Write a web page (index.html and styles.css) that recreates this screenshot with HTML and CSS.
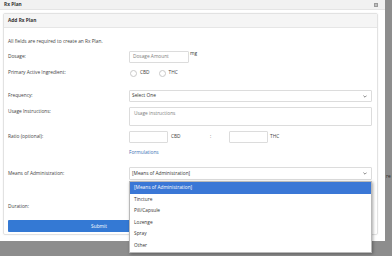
FILE: index.html
```html
<!DOCTYPE html>
<html>
<head>
<meta charset="utf-8">
<link rel="stylesheet" href="styles.css">
</head>
<body>
<div class="page">
  <div class="modal">
    <div class="modal-header">
      <span class="modal-title">Rx Plan</span>
      <svg class="close" width="4" height="4" viewBox="0 0 4 4"><rect width="4" height="4" fill="#9a9a9a"/><path d="M1 1L3 3M3 1L1 3" stroke="#d8d8d8" stroke-width="0.6"/></svg>
    </div>
    <div class="modal-body">
      <div class="card">
        <div class="card-header">Add Rx Plan</div>
        <div class="card-body">
          <p class="intro">All fields are required to create an Rx Plan.</p>

          <div class="row h12">
            <span class="lbl">Dosage:</span>
            <div class="field">
              <span class="box dosage placeholder">Dosage Amount</span>
              <span class="unit-top">mg</span>
            </div>
          </div>

          <div class="row h10 mb7">
            <span class="lbl">Primary Active Ingredient:</span>
            <div class="field">
              <span class="radio"></span><span class="radio-text">CBD</span>
              <span class="radio"></span><span class="radio-text">THC</span>
            </div>
          </div>

          <div class="row h12">
            <span class="lbl">Frequency:</span>
            <div class="field">
              <span class="box select">Select One
                <svg class="chev" width="4" height="3" viewBox="0 0 4 3"><path d="M0.4 0.6L2 2.2L3.6 0.6" fill="none" stroke="#555" stroke-width="0.7"/></svg>
              </span>
            </div>
          </div>

          <div class="row h19 top">
            <span class="lbl lbl-pad">Usage Instructions:</span>
            <div class="field">
              <span class="box textarea placeholder">Usage instructions</span>
            </div>
          </div>

          <div class="row h12">
            <span class="lbl">Ratio (optional):</span>
            <div class="field">
              <span class="box ratio"></span>
              <span class="ratio-unit">CBD</span>
              <span class="colon">:</span>
              <span class="box ratio"></span>
              <span class="ratio-unit">THC</span>
            </div>
          </div>

          <div class="row h10 mb4">
            <span class="lbl"></span>
            <div class="field"><a class="link">Formulations</a></div>
          </div>

          <div class="row h13">
            <span class="lbl">Means of Administration:</span>
            <div class="field">
              <span class="box select means">[Means of Administration]
                <svg class="chev" width="4" height="3" viewBox="0 0 4 3"><path d="M0.4 0.6L2 2.2L3.6 0.6" fill="none" stroke="#555" stroke-width="0.7"/></svg>
                <span class="dropdown">
                  <span class="opt active">[Means of Administration]</span>
                  <span class="opt">Tincture</span>
                  <span class="opt">Pill/Capsule</span>
                  <span class="opt">Lozenge</span>
                  <span class="opt">Spray</span>
                  <span class="opt">Other</span>
                </span>
              </span>
            </div>
          </div>

          <div class="row h12 mt16">
            <span class="lbl">Duration:</span>
            <div class="field"></div>
          </div>

          <div class="row h12 mt2">
            <button class="submit">Submit</button>
          </div>
        </div>
      </div>
    </div>
  </div>
  <div class="strip"><span class="behind">re i</span></div>
</div>
</body>
</html>
```

FILE: styles.css
```css
* { box-sizing: border-box; margin: 0; padding: 0; }

body {
  width: 392px;
  height: 256px;
  overflow: hidden;
  background: #8d8d8d;
  font-family: "Open Sans", "DejaVu Sans", sans-serif;
  font-size: 4.8px;
  line-height: 1.2;
  color: #3f3f3f;
}

.page { display: flex; height: 256px; }

.modal {
  width: 385px;
  height: 241px;
  flex: none;
  background: #fff;
  display: flex;
  flex-direction: column;
}

.modal-header {
  height: 10px;
  background: #f1f1f1;
  border-bottom: 1px solid #e4e4e4;
  display: flex;
  align-items: center;
  justify-content: space-between;
  padding: 0 7px 0 4px;
}
.modal-title { font-weight: 700; color: #333; }
.close { display: block; }

.modal-body { padding: 3px 7px 6px 3px; }

.card {
  border: 1px solid #e2e2e2;
  border-radius: 2px;
  box-shadow: 0 0 2px rgba(0, 0, 0, 0.07);
}

.card-header {
  height: 14px;
  line-height: 13px;
  background: #f5f5f5;
  border-bottom: 1px solid #e6e6e6;
  padding-left: 4px;
  font-weight: 700;
  color: #333;
}

.card-body {
  padding: 8px 5px 2px 4px;
  display: flex;
  flex-direction: column;
  gap: 5px;
}

.intro { height: 10px; line-height: 10px; }

.row { display: flex; align-items: center; }
.row.top { align-items: flex-start; }
.h10 { height: 10px; }
.h12 { height: 12px; }
.h13 { height: 13px; }
.h19 { height: 19px; }
.mb7 { margin-bottom: 7px; }
.mb4 { margin-bottom: 4px; }
.mt16 { margin-top: 16px; }
.mt2 { margin-top: 2px; }

.lbl { width: 121px; flex: none; }
.lbl-pad { padding-top: 2px; }

.field {
  flex: 1;
  height: 100%;
  display: flex;
  align-items: center;
}

.box {
  height: 100%;
  border: 1px solid #dcdcdc;
  border-radius: 1px;
  background: #fff;
  display: flex;
  align-items: center;
  color: #333;
}
.placeholder { color: #7e7e7e; }

.dosage { width: 60px; padding-left: 3px; }
.unit-top { align-self: flex-start; margin-left: 1px; margin-top: 0; color: #333; }

.radio {
  width: 7px;
  height: 7px;
  border: 1px solid #c9c9c9;
  border-radius: 50%;
  margin-left: 1px;
  flex: none;
}
.radio-text { margin-left: 3px; margin-right: 8px; }

.select {
  width: 100%;
  padding-left: 2px;
  position: relative;
  justify-content: space-between;
}
.chev { margin-right: 4px; display: block; }

.textarea {
  width: 100%;
  align-items: flex-start;
  padding: 3px 4px;
}

.ratio { width: 39px; }
.ratio-unit { margin-left: 3px; width: 39px; }
.colon { width: 19px; color: #666; }
.colon + .box + .ratio-unit { margin-left: 2px; }

.link { color: #3a6fb5; text-decoration: none; }

.dropdown {
  position: absolute;
  left: -1px;
  right: -1px;
  top: 13px;
  background: #fff;
  border: 1px solid #b9b9b9;
  box-shadow: 1px 1px 3px rgba(0, 0, 0, 0.35);
  display: flex;
  flex-direction: column;
  z-index: 5;
}
.opt {
  height: 11.6px;
  line-height: 11.6px;
  padding-left: 4px;
  color: #333;
}
.opt.active { background: #3a77d6; color: #fff; }

.submit {
  width: 50%;
  height: 12px;
  border: none;
  border-radius: 1px;
  background: #3479d4;
  color: #fff;
  font-family: "Open Sans", "DejaVu Sans", sans-serif;
  font-size: 4.8px;
}

.strip {
  flex: 1;
  overflow: hidden;
  padding-top: 174px;
  padding-left: 1px;
}
.behind { white-space: nowrap; color: #2c2c2c; }
```
